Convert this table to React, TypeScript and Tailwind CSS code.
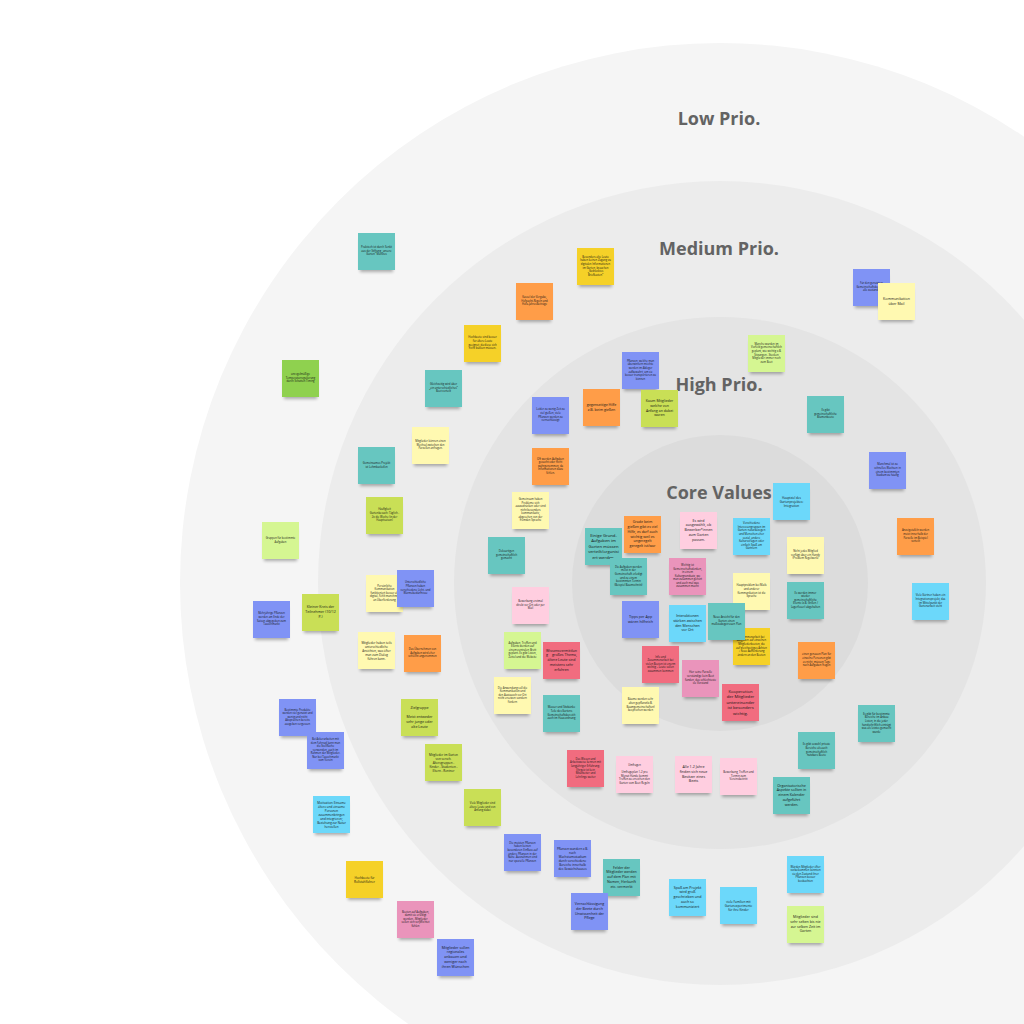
import React from "react";

type Note = [number, number, string, string, number];

const BG: Record<string, string> = {
  T: "bg-[#67c6c0]",
  G: "bg-[#f5d128]",
  Y: "bg-[#fff9b1]",
  O: "bg-[#ff9d48]",
  B: "bg-[#8093f5]",
  N: "bg-[#8fd14f]",
  L: "bg-[#d5f692]",
  M: "bg-[#c9df56]",
  C: "bg-[#6cd8fa]",
  P: "bg-[#ffcee0]",
  K: "bg-[#ea94bb]",
  R: "bg-[#f16c7f]",
};

const SIZE = [
  "text-[2.7px] leading-[3.6px]",
  "text-[3px] leading-[4px]",
  "text-[3.6px] leading-[4.8px]",
  "text-[4.2px] leading-[5.6px]",
];

const notes: Note[] = [
  [358, 233, "T", "Praktisch ist durch Senkt aus der Stiftung \u201eunsere Gärten\u201c Marktes", 0],
  [577, 248, "G", "Besonders alte Leute haben keinen Zugang zu digitalen Informationen im Garten, brauchen \u201eGedrucktes Briefkasten\u201c", 0],
  [516, 283, "O", "Kassel der Vergabe, Hofpacht-Regeln und Hofa-Jahresbeiträge", 0],
  [853, 269, "B", "Für den genutzten Gemeinschaftsbeet sind alle zuständig", 0],
  [878, 283, "Y", "Kommunikation über Mail", 2],
  [464, 325, "G", "Hochbeete sind besser für ältere Leute geeignet, da diese sich nicht bücken müssen.", 0],
  [748, 335, "L", "Manche wurden im Vorfeld gemeinschaftlich geplant, wie wichtig z.B. Sitzungen - Stecken Mitglieder immer noch zum Beet", 0],
  [282, 360, "N", "unregelmäßige Temperaturregulierung durch Schatten Timing", 0],
  [425, 370, "T", "Gleichzeitig wird über \u201eein unterschiedliches\u201c Beet verteilt", 0],
  [622, 352, "B", "Pflanzen, welche man überwintern möchte werden im Ableger aufbewahrt, um sie besser transportieren zu können", 0],
  [583, 389, "O", "gegenseitige Hilfe z.B. beim gießen", 2],
  [641, 390, "M", "Kaum Mitglieder welche von Anfang an dabei waren", 2],
  [532, 397, "B", "Leider zu wenig Zeit zu viel gießen, viele Pflanzen werden zu vernachlässigt", 0],
  [807, 396, "T", "Es gibt gemeinschaftliche Blumenbeete", 0],
  [412, 427, "Y", "Mitglieder können einen Wechsel zwischen den Parzellen anfragen.", 0],
  [358, 447, "T", "Gemeinsames Projekt ist Lehmbackofen", 0],
  [532, 448, "O", "Oft werden Aufgaben gesucht oder nicht wahrgenommen, da Informationen dazu fehlen.", 0],
  [869, 452, "B", "Manchmal ist zu schnelles Wachsen in einem bestimmten Stadium zu häufig", 0],
  [366, 497, "M", "Häufigkeit Gartenbesuch: Täglich - 2x die Woche (in der Hauptsaison)", 0],
  [512, 492, "Y", "Gemeinsam haben Probleme sich auszudrücken oder sind nicht besonders kommunikativ, abgesehen von der fremden Sprache", 0],
  [773, 483, "C", "Hauptziel des Gartenprojektes: Integration", 1],
  [262, 522, "L", "Gruppen für bestimmte Aufgaben", 0],
  [624, 516, "O", "Grade beim gießen gibt es viel Hilfe, es darf auch wichtig weil es ungeregelt geregelt ist/war", 2],
  [680, 512, "P", "Es wird ausgewählt, ob Bewerber*innen zum Garten passen.", 2],
  [733, 518, "C", "Verschiedene Interessengruppen im Garten: naturbezogen und Menschen eher sozial, andere Kulturvorlagen oder einfach Spaß am Gärtnern", 0],
  [897, 518, "O", "Anzeigetafeln werden meist innerhalb der Parzelle im Beispiel verteilt", 0],
  [585, 528, "T", "Einige Grund-Aufgaben im Garten müssen verteilt/organisiert werden.", 3],
  [488, 537, "T", "Dekoartigen gemeinschaftlich gemacht", 0],
  [787, 537, "Y", "Nicht jedes Mitglied verfügt über ein Handy (Problem Regelwerk)", 0],
  [610, 558, "T", "Die Aufgaben werden meist in der Gemeinschaft erledigt und zu einem bestimmten Termin (Beispiel Baumschnitt)", 0],
  [669, 558, "K", "Wichtig ist Gemeinschaftsdenken, in einem Kulturgrundsatz, wo man zusammen gehört und auch mal was zusammen macht", 0],
  [787, 582, "T", "Es werden immer wieder gemeinschaftliche Events (z.B. Grillen / Lagerfeuer) abgehalten", 0],
  [366, 575, "Y", "Persönliche Kommunikation funktioniert besser als digital. Fehlt manchmal an Überforderung", 0],
  [397, 570, "B", "Unterschiedliche Pflanzen haben verschiedene Licht- und Wärmebedürfnisse", 0],
  [302, 594, "M", "Kleiner Kreis der Teilnehmer (10/12 P.)", 2],
  [253, 601, "B", "Mehrjährige Pflanzen werden am Ende der Saison abgegeben zum Tauschmarkt", 0],
  [512, 587, "P", "Bewerbung erstmal direkt vor Ort oder per Mail", 0],
  [733, 573, "Y", "Hauptproblem bei Mails und anderer Kommunikation ist die Sprache", 0],
  [912, 583, "C", "Viele Gärtner haben ein Integrationsprojekt, das im Mittelpunkt der Gartenarbeit steht", 0],
  [622, 601, "B", "Tipps per App wären hilfreich", 2],
  [669, 605, "C", "Interaktionen stärken zwischen den Menschen vor Ort", 2],
  [733, 628, "G", "Zusammenarbeit bei Aufgaben auf einzelnen Mitgliederbeeten, die auf gleichzeitiges Achten + neue Aufforderung ändern an den Beeten", 0],
  [708, 603, "T", "Neue Ansicht für den Garten einen maßstabsgetreuen Plan", 0],
  [358, 632, "Y", "Mitglieder haben teils unterschiedliche Ansichten, was öfter man zum Dialog führen kann.", 1],
  [404, 635, "O", "Das Übernehmen von Aufgaben wird eher schlecht angenommen", 0],
  [504, 632, "L", "Aufgaben, Treffen und Events werden auf einem zentralen Brett geplant. Es gibt Listen, Zettel und die Website", 0],
  [798, 642, "O", "einen genauen Plan für einzelne Personen gibt es nicht, müssen Tage nach Aufgaben fragen", 0],
  [543, 642, "R", "Wissensvermittlung = großes Thema, ältere Leute sind meistens sehr erfahren", 2],
  [642, 646, "R", "Info und Zusammenarbeit bei vielen Beeten ist enorm wichtig \u2013 Leute sollen zusammen kommen", 0],
  [682, 660, "K", "Hier seine Parzelle verständige kein Beet fanden, das schlechteste sie Vorstand", 0],
  [494, 677, "Y", "Die Anwendung soll die Kommunikation und den Austausch vor Ort nicht ersetzen sondern fördern", 0],
  [622, 687, "Y", "Bäume werden sehr alten gepflanzt(z.B. Baumgemeinschaften) besprochen werden", 0],
  [722, 684, "R", "Kooperation der Mitglieder untereinander ist besonders wichtig.", 3],
  [401, 699, "M", "Zielgruppe\n\nMeist entweder sehr junge oder alte Leute", 2],
  [543, 695, "T", "Wasser und Sitzbänke Teile des Gartens Gemeinschaftsbereich auch im Hausordnung", 0],
  [279, 699, "B", "Bestimmte Produkte werden viel genutzt und wenig und nicht Absprachen bereits ausgeben vergessen", 0],
  [858, 705, "T", "Es gibt für bestimmte Bereiche im Anbau Listen, in die jeder handschriftlich einträgt was als letztes gemacht wurde", 0],
  [307, 732, "B", "Bei Ackerarbeiten mit dem Fahrrad kann man die Stellfläche verwenden, auch im Rahmen der Mitglieder. Nur bei Tauschmarkt vom Verein", 0],
  [425, 744, "M", "Mitglieder im Garten von versch. Altersgruppen - Kinder - Studenten - Eltern - Rentner", 1],
  [567, 750, "R", "Das Wissen und Arbeitsweise kennen mit langjähriger Erfahrung. Ehrgeiz ist kein Mitarbeiter und Lehrlinge weiter", 0],
  [616, 756, "P", "Umfragen\n\nUmfrageplan 1-2 pro Monat Hände kommt Treffen zu erreichen den Garten vom Beet Regeln", 0],
  [675, 756, "P", "Alle 1-2 Jahre finden sich neue Besitzer eines Beets", 2],
  [720, 758, "P", "Bewerbung, Treffen und Termin zum Vereinsbeitritt", 0],
  [798, 732, "T", "Es gibt sowohl private Bereiche als auch gemeinschaftlich nutzbare Beete", 0],
  [773, 777, "T", "Organisatorische Aspekte sollten in einem Kalender aufgeführt werden.", 2],
  [464, 789, "M", "Viele Mitglieder sind ältere Leute und von Anfang dabei", 0],
  [313, 796, "C", "Motivation: Einsame ältere und einsame Personen zusammenbringen und integrieren; Beziehung zur Natur herstellen", 1],
  [504, 834, "B", "Die meisten Pflanzen haben keinen besonderen Einfluss auf andere Pflanzen in der Nähe. Ausnahmen sind nur spezielle Pflanzen", 0],
  [554, 840, "B", "Pflanzen wandern z.B. nach Wachstumsstadium durch verschiedene Bereiche innerhalb des Gewächshauses", 1],
  [603, 859, "T", "Felder der Mitglieder werden auf dem Plan mit Namen, Herkunft etc. vermerkt", 2],
  [346, 861, "G", "Hochbeete für Rollstuhlfahrer", 1],
  [669, 879, "C", "Spaß am Projekt wird groß geschrieben und auch so kommuniziert", 2],
  [720, 887, "C", "viele Familien mit Gartenexperimente für ihre Kinder", 1],
  [787, 856, "C", "Würden Mitglieder öfter vorbeikommen könnten sie den Zustand ihrer Pflanzen besser beobachten", 0],
  [571, 893, "B", "Vernachlässigung der Beete durch Unwissenheit der Pflege", 2],
  [397, 901, "K", "Beeten auf Aufgaben, damit sie erledigt werden - Mitglieder sollen sich verpflichtet fühlen", 0],
  [787, 906, "L", "Mitglieder sind sehr selten bis nie zur selben Zeit im Garten", 2],
  [437, 939, "B", "Mitglieder sollen regionales anbauen und weniger nach ihren Wünschen", 2],
];

function Sticky({ n }: { n: Note }) {
  const [x, y, c, text, s] = n;
  return (
    <div
      className={`absolute w-[37px] h-[37px] ${BG[c]} shadow-[0_4px_3px_-2px_rgba(0,0,0,0.3)] flex items-center justify-center px-[3px] py-[2px]`}
      style={{ left: x, top: y }}
    >
      <p className={`${SIZE[s]} text-center text-[#151515] whitespace-pre-line break-words w-full`}>{text}</p>
    </div>
  );
}

function Label({ text, top }: { text: string; top: string }) {
  return (
    <div className={`absolute left-[569px] w-[300px] text-center text-[18px] leading-[24px] font-bold text-[#636363] ${top}`}>
      {text}
    </div>
  );
}

export default function App() {
  return (
    <div
      className="relative w-[1024px] h-[1024px] overflow-hidden bg-white"
      style={{ fontFamily: '"Open Sans", "Noto Sans", sans-serif' }}
    >
      <div className="absolute left-[180px] top-[43px] w-[1080px] h-[1080px] rounded-full bg-[#f5f5f5]" />
      <div className="absolute left-[318px] top-[181px] w-[804px] h-[804px] rounded-full bg-[#ececec]" />
      <div className="absolute left-[454px] top-[317px] w-[532px] h-[532px] rounded-full bg-[#e4e4e4]" />
      <div className="absolute left-[572px] top-[435px] w-[296px] h-[296px] rounded-full bg-[#dcdcdc]" />

      <Label text="Low Prio." top="top-[106px]" />
      <Label text="Medium Prio." top="top-[236px]" />
      <Label text="High Prio." top="top-[372px]" />
      <Label text="Core Values" top="top-[480px]" />

      {notes.map((n, i) => (
        <Sticky key={i} n={n} />
      ))}
    </div>
  );
}
